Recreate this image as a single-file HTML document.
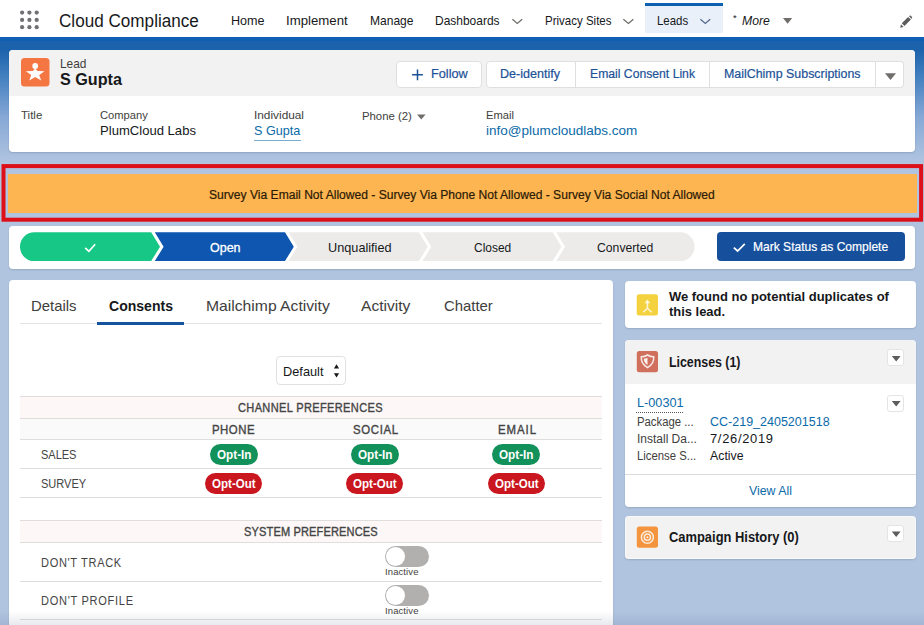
<!DOCTYPE html>
<html lang="en">
<head>
<meta charset="utf-8">
<title>S Gupta | Lead | Cloud Compliance</title>
<style>
*{box-sizing:border-box;margin:0;padding:0}
html,body{width:924px;height:625px;overflow:hidden}
body{font-family:"Liberation Sans",sans-serif;color:#16181a;position:relative;background:#b0c4e0}
.abs{position:absolute}
.t{position:absolute;white-space:nowrap;line-height:1}
#bg{left:0;top:37px;width:924px;height:140px;background:linear-gradient(to bottom,#1b60ab 0px,#1d63ac 13px,#4380c0 40px,#86a8d6 80px,#b0c4e0 125px)}
#nav{left:0;top:0;width:924px;height:37px;background:#fff}
#navline{left:0;top:37px;width:924px;height:4px;background:#0f5fb2}
.card{position:absolute;background:#fff;border-radius:4px;box-shadow:0 1px 2px rgba(0,0,0,.14)}
.hl{position:absolute;left:20px;width:582px;height:1px;background:#dfdedd}
.badge{position:absolute;border-radius:11px;height:21px}
.in{background:#12925a;width:48px}
.out{background:#c9161f;width:57px}
.dd{position:absolute;width:17px;height:17px;background:#fff;border:1px solid #e6e4e3;border-radius:3px}
.tog{position:absolute;left:385px;width:44px;height:21px;border-radius:11px;background:#b2b0ae}
.tog:after{content:"";position:absolute;left:1px;top:1px;width:19px;height:19px;border-radius:50%;background:#fff}
#ov{position:absolute;left:0;top:0}

</style>
</head>
<body>
<div id="bg" class="abs"></div>
<div id="nav" class="abs"></div>
<div id="navline" class="abs"></div>
<div class="abs" style="left:645px;top:3px;width:78px;height:30px;background:#eaf0fa;border-top:3px solid #0d5fb0"></div>

<!-- Highlights panel -->
<div class="card" style="left:9px;top:50px;width:906px;height:102px;overflow:hidden">
  <div class="abs" style="left:0;top:0;width:906px;height:46px;background:#f3f2f2"></div>
</div>
<div class="abs" style="left:396px;top:61px;width:86px;height:27px;background:#fff;border:1px solid #e0dfde;border-radius:4px"></div>
<div class="abs" style="left:486px;top:61px;width:390px;height:27px;background:#fff;border:1px solid #e0dfde;border-radius:4px 0 0 4px"></div>
<div class="abs" style="left:876px;top:61px;width:28px;height:27px;background:#fff;border:1px solid #e0dfde;border-left:0;border-radius:0 4px 4px 0"></div>
<div class="abs" style="left:575px;top:62px;width:1px;height:25px;background:#e0dfde"></div>
<div class="abs" style="left:709px;top:62px;width:1px;height:25px;background:#e0dfde"></div>
<div class="abs" style="left:254px;top:140px;width:47px;height:1px;background:#0b6aa8;opacity:.55"></div>

<!-- Banner -->
<div class="abs" style="left:8px;top:174px;width:909px;height:39px;background:#fdb552"></div>

<!-- Path -->
<div class="card" style="left:9px;top:226px;width:906px;height:43px"></div>
<div class="abs" style="left:717px;top:232px;width:188px;height:29px;background:#16509d;border-radius:4px"></div>

<!-- Main tab card -->
<div class="card" style="left:9px;top:280px;width:604px;height:360px"></div>
<div class="hl" style="top:323px;background:#e5e4e3"></div>
<div class="abs" style="left:97px;top:322px;width:87px;height:3px;background:#15539e"></div>
<div class="abs" style="left:276px;top:356px;width:70px;height:29px;border:1px solid #e2e1e0;border-radius:4px;background:#fff"></div>

<div class="abs" style="left:20px;top:397px;width:582px;height:21px;background:#fdf8f7"></div>
<div class="abs" style="left:20px;top:419px;width:582px;height:20px;background:#fafafa"></div>
<div class="abs" style="left:20px;top:521px;width:582px;height:21px;background:#fdf8f7"></div>
<div class="hl" style="top:396px"></div>
<div class="hl" style="top:418px"></div>
<div class="hl" style="top:439px"></div>
<div class="hl" style="top:468px"></div>
<div class="hl" style="top:497px"></div>
<div class="hl" style="top:520px"></div>
<div class="hl" style="top:542px"></div>
<div class="hl" style="top:581px"></div>
<div class="hl" style="top:619px"></div>

<div class="badge in" style="left:210px;top:444px"></div>
<div class="badge in" style="left:351px;top:444px"></div>
<div class="badge in" style="left:492px;top:444px"></div>
<div class="badge out" style="left:205px;top:473px"></div>
<div class="badge out" style="left:346px;top:473px"></div>
<div class="badge out" style="left:488px;top:473px"></div>
<div class="tog" style="top:546px"></div>
<div class="tog" style="top:585px"></div>

<!-- Right column -->
<div class="card" style="left:625px;top:281px;width:291px;height:47px"></div>
<div class="card" style="left:625px;top:340px;width:291px;height:167px;overflow:hidden">
  <div class="abs" style="left:0;top:0;width:291px;height:44px;background:#f3f2f2"></div>
  <div class="abs" style="left:0;top:134px;width:291px;height:1px;background:#dddbda"></div>
</div>
<div class="dd" style="left:887px;top:349px"></div>
<div class="abs" style="left:636px;top:412px;width:47px;height:0;border-top:1px dotted #555"></div>
<div class="dd" style="left:887px;top:395px"></div>
<div class="card" style="left:625px;top:516px;width:291px;height:43px;background:#f3f2f2;box-shadow:inset 0 0 0 1px rgba(255,255,255,.55),0 1px 2px rgba(0,0,0,.14)"></div>
<div class="dd" style="left:887px;top:525px"></div>

<div id="btm" class="abs" style="left:0;top:611px;width:924px;height:14px;background:linear-gradient(to bottom,rgba(70,90,130,0),rgba(70,90,130,.13))"></div>
<!-- icon / shape overlay -->
<svg id="ov" width="924" height="625" viewBox="0 0 924 625">
<!-- waffle -->
<g fill="#6e7073">
<circle cx="22.100" cy="12.600" r="2.100"/><circle cx="29.400" cy="12.600" r="2.100"/><circle cx="36.700" cy="12.600" r="2.100"/>
<circle cx="22.100" cy="19.900" r="2.100"/><circle cx="29.400" cy="19.900" r="2.100"/><circle cx="36.700" cy="19.900" r="2.100"/>
<circle cx="22.100" cy="27.200" r="2.100"/><circle cx="29.400" cy="27.200" r="2.100"/><circle cx="36.700" cy="27.200" r="2.100"/>
</g>
<!-- nav chevrons -->
<g fill="none" stroke="#706e6b" stroke-width="1.300">
<path d="M512.400 19.300 L517.300 23.500 L522.200 19.300"/>
<path d="M623.400 19.300 L628.400 23.500 L633.400 19.300"/>
<path d="M700.400 19.300 L705.300 23.500 L710.200 19.300" stroke="#54698d"/>
</g>
<path d="M783 18 H792.200 L787.600 23.800 Z" fill="#706e6b"/>
<!-- pencil -->
<g fill="#5c5c5c">
<path d="M900.200 27.700 L901 24.300 L903.600 26.900 Z"/>
<path d="M901.800 23.300 L908.200 16.900 L910.900 19.600 L904.500 26 Z"/>
<path d="M909 16.200 L909.600 15.700 Q910.200 15.300 910.800 15.800 L912 17 Q912.400 17.600 912 18.200 L911.500 18.800 Z"/>
</g>
<!-- lead icon -->
<rect x="21" y="58" width="28.500" height="28.500" rx="3.500" fill="#f47643"/>
<circle cx="35.200" cy="66" r="2.900" fill="#fff"/>
<path d="M35.200 68.600 L37.500 71 L44.500 71.200 L39.200 75 L41.200 80.400 L35.200 77 L29.200 80.400 L31.200 75 L25.900 71.200 L32.900 71 Z" fill="#fff"/>
<!-- follow plus, button triangles -->
<path d="M417.500 69.500 V80.200 M412.100 74.850 H422.900" stroke="#1b5297" stroke-width="1.500" fill="none"/>
<path d="M885 73.300 H896 L890.500 80 Z" fill="#706e6b"/>
<path d="M417 114.500 H425.600 L421.300 119.600 Z" fill="#706e6b"/>
<!-- red annotation box -->
<rect x="3.500" y="166.100" width="917.600" height="53.600" fill="none" stroke="#dd1019" stroke-width="4"/>
<!-- path -->
<g transform="translate(20 232.300)">
<path d="M14.400 0 H131.200 L140 14.400 L131.200 28.800 H14.400 A14.400 14.400 0 0 1 14.400 0 Z" fill="#17c785"/>
<path d="M134.800 0 H265 L273.800 14.400 L265 28.800 H134.800 L143.600 14.400 Z" fill="#0e56b0"/>
<path d="M268.600 0 H398.900 L407.700 14.400 L398.900 28.800 H268.600 L277.400 14.400 Z" fill="#ecebea"/>
<path d="M402.500 0 H532.700 L541.500 14.400 L532.700 28.800 H402.500 L411.300 14.400 Z" fill="#ecebea"/>
<path d="M536.300 0 H660.100 A14.400 14.400 0 0 1 660.100 28.800 H536.300 L545.100 14.400 Z" fill="#ecebea"/>
<path d="M65.200 15.600 L68.900 19.100 L75.200 12" fill="none" stroke="#fff" stroke-width="1.700"/>
</g>
<path d="M733.800 247.600 L737.600 251 L744.800 243.800" fill="none" stroke="#fff" stroke-width="1.700"/>
<!-- select arrows -->
<path d="M336.500 364.200 L339.100 368.400 H333.900 Z M336.500 377.400 L339.100 373.200 H333.900 Z" fill="#16181a"/>
<!-- duplicates icon -->
<rect x="636.700" y="294.200" width="21.300" height="21.300" rx="2.500" fill="#f4d23f"/>
<g fill="none" stroke="#fff" stroke-opacity=".78" stroke-width="1.600">
<path d="M647.400 302 V308.600 M647.400 308.200 L643.200 312.300 M647.400 308.200 L651.600 312.300"/>
</g>
<path d="M647.400 299.600 L650.200 303.300 H644.600 Z" fill="#fff" fill-opacity=".8"/>
<!-- licenses icon -->
<rect x="636.800" y="351.100" width="21.200" height="21.200" rx="2.500" fill="#d06f5c"/>
<path d="M647.500 355 Q650.500 356.900 653.700 356.800 Q654.300 363.800 647.500 367.600 Q640.700 363.800 641.300 356.800 Q644.500 356.900 647.500 355 Z" fill="none" stroke="#fff" stroke-opacity=".85" stroke-width="1.500"/>
<path d="M647.500 357.700 Q645.600 358.600 643.800 358.700 Q643.800 362.700 647.500 365 Z" fill="#fff" fill-opacity=".9"/>
<!-- campaign icon -->
<rect x="636.800" y="526.600" width="21.200" height="21.200" rx="2.500" fill="#f4943e"/>
<g fill="none" stroke="#fff" stroke-opacity=".8" stroke-width="1.500">
<circle cx="647.400" cy="537.200" r="6"/><circle cx="647.400" cy="537.200" r="3.100"/>
</g>
<circle cx="647.400" cy="537.200" r="1" fill="#fff" fill-opacity=".85"/>
<!-- dropdown triangles -->
<path d="M891.800 356.100 H900.600 L896.200 361.600 Z M891.800 401 H900.600 L896.200 406.500 Z M891.800 531.600 H900.600 L896.200 537.100 Z" fill="#5f5d5b"/>
</svg>

<!-- text layer -->
<div id="app" class="t" style="left:58.8px;top:12.5px;font-size:17.5px;letter-spacing:0.00px;transform:scaleX(0.978);transform-origin:0 50%;color:#16181a">Cloud Compliance</div>
<div id="n_home" class="t" style="left:230.9px;top:14.6px;font-size:12.6px;letter-spacing:0.00px;color:#16181a">Home</div>
<div id="n_impl" class="t" style="left:286.4px;top:14.6px;font-size:12.6px;letter-spacing:0.00px;transform:scaleX(1.049);transform-origin:0 50%;color:#16181a">Implement</div>
<div id="n_manage" class="t" style="left:369.9px;top:14.6px;font-size:12.6px;letter-spacing:0.00px;transform:scaleX(0.956);transform-origin:0 50%;color:#16181a">Manage</div>
<div id="n_dash" class="t" style="left:435.4px;top:14.6px;font-size:12.6px;letter-spacing:0.00px;transform:scaleX(0.950);transform-origin:0 50%;color:#16181a">Dashboards</div>
<div id="n_priv" class="t" style="left:544.9px;top:14.6px;font-size:12.6px;letter-spacing:0.00px;transform:scaleX(0.914);transform-origin:0 50%;color:#16181a">Privacy Sites</div>
<div id="n_leads" class="t" style="left:656.9px;top:14.6px;font-size:12.6px;letter-spacing:0.00px;transform:scaleX(0.909);transform-origin:0 50%;color:#16181a">Leads</div>
<div id="n_more" class="t" style="left:741.6px;top:14.6px;font-size:12.6px;letter-spacing:0.00px;transform:scaleX(0.969);transform-origin:0 50%;color:#16181a;font-style:italic">More</div>
<div id="n_star" class="t" style="left:733.1px;top:14.0px;font-size:9px;letter-spacing:0.58px;transform:scaleX(1.050);transform-origin:0 50%;color:#16181a">*</div>
<div id="lead" class="t" style="left:60.1px;top:57.9px;font-size:12.2px;letter-spacing:0.00px;transform:scaleX(0.977);transform-origin:0 50%;color:#3e3e3c">Lead</div>
<div id="sgupta" class="t" style="left:60.1px;top:70.9px;font-size:16.5px;letter-spacing:0.00px;transform:scaleX(0.980);transform-origin:0 50%;color:#16181a;font-weight:bold">S Gupta</div>
<div id="b_follow" class="t" style="left:430.6px;top:67.8px;font-size:12.3px;letter-spacing:0.00px;transform:scaleX(1.035);transform-origin:0 50%;color:#1b5297;-webkit-text-stroke:0.2px #1b5297">Follow</div>
<div id="b_deid" class="t" style="left:500.3px;top:67.8px;font-size:12.3px;letter-spacing:-0.00px;transform:scaleX(1.022);transform-origin:0 50%;color:#1b5297;-webkit-text-stroke:0.2px #1b5297">De-identify</div>
<div id="b_ecl" class="t" style="left:589.9px;top:67.8px;font-size:12.3px;letter-spacing:0.00px;transform:scaleX(0.991);transform-origin:0 50%;color:#1b5297;-webkit-text-stroke:0.2px #1b5297">Email Consent Link</div>
<div id="b_mc" class="t" style="left:723.9px;top:67.8px;font-size:12.3px;letter-spacing:0.00px;transform:scaleX(1.009);transform-origin:0 50%;color:#1b5297;-webkit-text-stroke:0.2px #1b5297">MailChimp Subscriptions</div>
<div id="l_title" class="t" style="left:20.8px;top:109.7px;font-size:11.4px;letter-spacing:0.00px;transform:scaleX(1.009);transform-origin:0 50%;color:#3e3e3c">Title</div>
<div id="l_company" class="t" style="left:100.1px;top:109.7px;font-size:11.4px;letter-spacing:0.00px;transform:scaleX(0.981);transform-origin:0 50%;color:#3e3e3c">Company</div>
<div id="v_company" class="t" style="left:100.1px;top:124.0px;font-size:13px;letter-spacing:0.00px;transform:scaleX(1.006);transform-origin:0 50%;color:#16181a">PlumCloud Labs</div>
<div id="l_indiv" class="t" style="left:253.9px;top:109.7px;font-size:11.4px;letter-spacing:0.00px;transform:scaleX(1.039);transform-origin:0 50%;color:#3e3e3c">Individual</div>
<div id="v_indiv" class="t" style="left:253.9px;top:124.0px;font-size:13px;letter-spacing:0.00px;transform:scaleX(0.968);transform-origin:0 50%;color:#0b6aa8">S Gupta</div>
<div id="l_phone" class="t" style="left:361.9px;top:111.1px;font-size:11.4px;letter-spacing:0.00px;color:#3e3e3c">Phone (2)</div>
<div id="l_email" class="t" style="left:485.5px;top:109.7px;font-size:11.4px;letter-spacing:0.00px;transform:scaleX(0.979);transform-origin:0 50%;color:#3e3e3c">Email</div>
<div id="v_email" class="t" style="left:485.5px;top:124.0px;font-size:13px;letter-spacing:0.00px;transform:scaleX(1.041);transform-origin:0 50%;color:#0b6aa8">info@plumcloudlabs.com</div>
<div id="banner" class="t" style="left:208.9px;top:188.5px;font-size:12px;letter-spacing:0.00px;transform:scaleX(1.007);transform-origin:0 50%;color:#2b1a05;-webkit-text-stroke:0.2px #2b1a05">Survey Via Email Not Allowed - Survey Via Phone Not Allowed - Survey Via Social Not Allowed</div>
<div id="p_open" class="t" style="left:209.9px;top:241.9px;font-size:12.6px;letter-spacing:0.00px;transform:scaleX(0.990);transform-origin:0 50%;color:#fff;-webkit-text-stroke:0.3px #fff">Open</div>
<div id="p_unq" class="t" style="left:327.8px;top:241.9px;font-size:12.6px;letter-spacing:0.00px;transform:scaleX(1.009);transform-origin:0 50%;color:#16181a">Unqualified</div>
<div id="p_closed" class="t" style="left:474.2px;top:241.9px;font-size:12.6px;letter-spacing:0.00px;transform:scaleX(0.949);transform-origin:0 50%;color:#16181a">Closed</div>
<div id="p_conv" class="t" style="left:596.8px;top:241.9px;font-size:12.6px;letter-spacing:0.00px;transform:scaleX(0.969);transform-origin:0 50%;color:#16181a">Converted</div>
<div id="p_mark" class="t" style="left:753.2px;top:240.9px;font-size:12.6px;letter-spacing:0.00px;transform:scaleX(0.956);transform-origin:0 50%;color:#fff;-webkit-text-stroke:0.2px #fff">Mark Status as Complete</div>
<div id="t_details" class="t" style="left:30.9px;top:297.8px;font-size:15px;letter-spacing:0.00px;transform:scaleX(0.992);transform-origin:0 50%;color:#3e3e3c">Details</div>
<div id="t_consents" class="t" style="left:108.9px;top:297.8px;font-size:15px;letter-spacing:0.00px;transform:scaleX(0.936);transform-origin:0 50%;color:#16181a;font-weight:bold">Consents</div>
<div id="t_mail" class="t" style="left:205.6px;top:297.8px;font-size:15px;letter-spacing:0.00px;transform:scaleX(1.046);transform-origin:0 50%;color:#3e3e3c">Mailchimp Activity</div>
<div id="t_activity" class="t" style="left:361.1px;top:297.8px;font-size:15px;letter-spacing:-0.00px;transform:scaleX(1.038);transform-origin:0 50%;color:#3e3e3c">Activity</div>
<div id="t_chatter" class="t" style="left:443.6px;top:297.8px;font-size:15px;letter-spacing:0.00px;transform:scaleX(0.992);transform-origin:0 50%;color:#3e3e3c">Chatter</div>
<div id="default" class="t" style="left:282.9px;top:365.5px;font-size:12.6px;letter-spacing:0.00px;transform:scaleX(1.015);transform-origin:0 50%;color:#16181a">Default</div>
<div id="h_channel" class="t" style="left:238.4px;top:401.8px;font-size:12px;letter-spacing:0.38px;transform:scaleX(0.920);transform-origin:0 50%;color:#444;-webkit-text-stroke:0.35px #444">CHANNEL PREFERENCES</div>
<div id="c_phone" class="t" style="left:212.3px;top:423.6px;font-size:12px;letter-spacing:0.54px;transform:scaleX(0.950);transform-origin:0 50%;color:#444;-webkit-text-stroke:0.35px #444">PHONE</div>
<div id="c_social" class="t" style="left:352.8px;top:423.6px;font-size:12px;letter-spacing:0.69px;transform:scaleX(0.950);transform-origin:0 50%;color:#444;-webkit-text-stroke:0.35px #444">SOCIAL</div>
<div id="c_email" class="t" style="left:497.8px;top:423.6px;font-size:12px;letter-spacing:1.02px;transform:scaleX(0.950);transform-origin:0 50%;color:#444;-webkit-text-stroke:0.35px #444">EMAIL</div>
<div id="r_sales" class="t" style="left:40.9px;top:449.3px;font-size:12px;letter-spacing:-0.03px;transform:scaleX(0.920);transform-origin:0 50%;color:#444">SALES</div>
<div id="r_survey" class="t" style="left:40.9px;top:478.0px;font-size:12px;letter-spacing:-0.00px;transform:scaleX(0.920);transform-origin:0 50%;color:#444">SURVEY</div>
<div id="h_system" class="t" style="left:243.8px;top:525.8px;font-size:12px;letter-spacing:0.15px;transform:scaleX(0.920);transform-origin:0 50%;color:#444;-webkit-text-stroke:0.35px #444">SYSTEM PREFERENCES</div>
<div id="r_track" class="t" style="left:40.9px;top:556.8px;font-size:12px;letter-spacing:0.73px;transform:scaleX(0.920);transform-origin:0 50%;color:#444">DON'T TRACK</div>
<div id="r_profile" class="t" style="left:40.9px;top:595.3px;font-size:12px;letter-spacing:0.77px;transform:scaleX(0.920);transform-origin:0 50%;color:#444">DON'T PROFILE</div>
<div id="inact1" class="t" style="left:384.9px;top:567.9px;font-size:9px;letter-spacing:0.12px;transform:scaleX(1.050);transform-origin:0 50%;color:#3e3e3c">Inactive</div>
<div id="inact2" class="t" style="left:384.9px;top:607.1px;font-size:9px;letter-spacing:0.12px;transform:scaleX(1.050);transform-origin:0 50%;color:#3e3e3c">Inactive</div>
<div id="o_in1" class="t" style="left:216.9px;top:448.8px;font-size:12px;letter-spacing:0.00px;transform:scaleX(0.977);transform-origin:0 50%;color:#fff;font-weight:bold">Opt-In</div>
<div id="o_in2" class="t" style="left:357.9px;top:448.8px;font-size:12px;letter-spacing:0.00px;transform:scaleX(0.977);transform-origin:0 50%;color:#fff;font-weight:bold">Opt-In</div>
<div id="o_in3" class="t" style="left:498.9px;top:448.8px;font-size:12px;letter-spacing:0.00px;transform:scaleX(0.977);transform-origin:0 50%;color:#fff;font-weight:bold">Opt-In</div>
<div id="o_out1" class="t" style="left:212.3px;top:477.8px;font-size:12px;letter-spacing:0.00px;transform:scaleX(0.962);transform-origin:0 50%;color:#fff;font-weight:bold">Opt-Out</div>
<div id="o_out2" class="t" style="left:353.3px;top:477.8px;font-size:12px;letter-spacing:0.00px;transform:scaleX(0.962);transform-origin:0 50%;color:#fff;font-weight:bold">Opt-Out</div>
<div id="o_out3" class="t" style="left:494.8px;top:477.8px;font-size:12px;letter-spacing:0.00px;transform:scaleX(0.962);transform-origin:0 50%;color:#fff;font-weight:bold">Opt-Out</div>
<div id="dup1" class="t" style="left:668.9px;top:290.0px;font-size:13px;letter-spacing:0.00px;color:#16181a;font-weight:bold">We found no potential duplicates of</div>
<div id="dup2" class="t" style="left:668.9px;top:305.3px;font-size:13px;letter-spacing:0.00px;transform:scaleX(0.994);transform-origin:0 50%;color:#16181a;font-weight:bold">this lead.</div>
<div id="lic" class="t" style="left:668.9px;top:354.5px;font-size:14px;letter-spacing:0.00px;transform:scaleX(0.883);transform-origin:0 50%;color:#16181a;font-weight:bold">Licenses (1)</div>
<div id="l00301" class="t" style="left:636.5px;top:395.7px;font-size:13.4px;letter-spacing:0.00px;transform:scaleX(0.948);transform-origin:0 50%;color:#0b6aa8">L-00301</div>
<div id="k_pkg" class="t" style="left:636.5px;top:415.6px;font-size:12.3px;letter-spacing:0.00px;transform:scaleX(0.920);transform-origin:0 50%;color:#3e3e3c">Package ...</div>
<div id="v_pkg" class="t" style="left:710.1px;top:415.6px;font-size:12.3px;letter-spacing:-0.00px;transform:scaleX(1.017);transform-origin:0 50%;color:#0b6aa8">CC-219_2405201518</div>
<div id="k_inst" class="t" style="left:636.5px;top:432.9px;font-size:12.3px;letter-spacing:0.00px;transform:scaleX(0.974);transform-origin:0 50%;color:#3e3e3c">Install Da...</div>
<div id="v_inst" class="t" style="left:710.1px;top:432.9px;font-size:12.3px;letter-spacing:0.66px;transform:scaleX(1.050);transform-origin:0 50%;color:#16181a">7/26/2019</div>
<div id="k_lic" class="t" style="left:636.5px;top:450.1px;font-size:12.3px;letter-spacing:0.00px;transform:scaleX(0.921);transform-origin:0 50%;color:#3e3e3c">License S...</div>
<div id="v_lic" class="t" style="left:710.1px;top:450.1px;font-size:12.3px;letter-spacing:0.00px;color:#16181a">Active</div>
<div id="viewall" class="t" style="left:749.1px;top:485.3px;font-size:12.6px;letter-spacing:0.00px;transform:scaleX(0.980);transform-origin:0 50%;color:#0b6aa8">View All</div>
<div id="camp" class="t" style="left:668.9px;top:530.1px;font-size:14px;letter-spacing:0.00px;transform:scaleX(0.922);transform-origin:0 50%;color:#16181a;font-weight:bold">Campaign History (0)</div>
</body>
</html>
